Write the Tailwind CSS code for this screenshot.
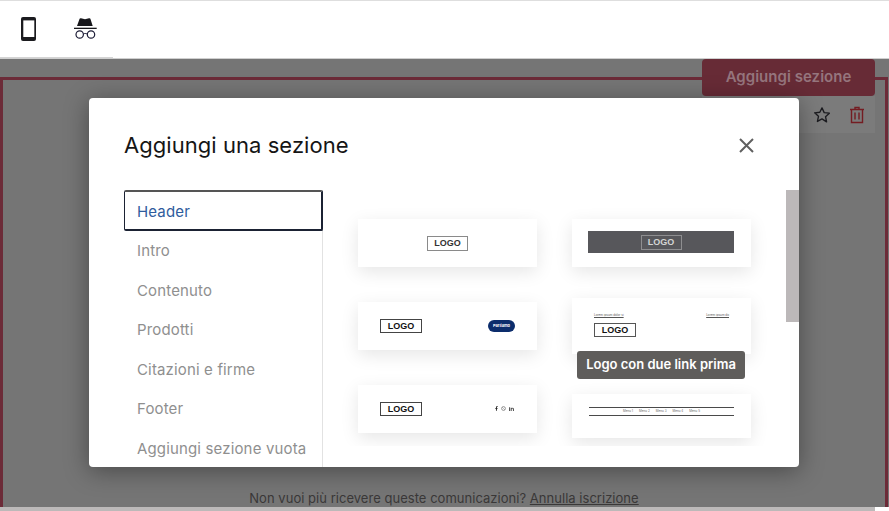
<!DOCTYPE html>
<html lang="it">
<head>
<meta charset="utf-8">
<script src="https://cdn.jsdelivr.net/npm/@tailwindcss/browser@4"></script>
<title>Aggiungi sezione</title>
</head>
<body class="bg-white font-['Inter',sans-serif]">
<div class="relative w-[889px] h-[511px] overflow-hidden flex flex-col bg-white">
  <!-- Toolbar -->
  <div class="h-[59px] shrink-0 border-t border-t-[#dedede] border-b border-b-[#cfcfcf] flex items-start">
    <div class="w-[113px] h-[57px] border-b border-b-[#d4d4d4] flex">
      <div class="w-[57px] h-full flex items-center justify-center">
        <svg width="15" height="24" viewBox="0 0 15 24" class="-mt-[1px]"><rect width="15" height="24" rx="2" fill="#1b1b1f"/><rect x="2.300" y="3.400" width="11" height="16.600" fill="#fff"/></svg>
      </div>
      <div class="w-[56px] h-full flex items-center justify-center">
        <svg width="24" height="24" viewBox="0 0 24 24" class="-mt-[1px] ml-[2px]"><path d="M3 9 5.600 1.800C5.800 1.200 6.400 1 7 1.200L11 2.200l4-1c.6-.2 1.200 0 1.400.6L18.700 9z" fill="#17171b"/><rect x="0" y="10.700" width="22.700" height="1.300" fill="#17171b"/><circle cx="5.700" cy="17.500" r="3.700" fill="none" stroke="#1b1b35" stroke-width="1.200"/><circle cx="17" cy="17.500" r="3.700" fill="none" stroke="#1b1b35" stroke-width="1.200"/><path d="M9.400 17c1.200-.7 2.400-.7 3.800 0" fill="none" stroke="#1b1b35" stroke-width="1"/></svg>
      </div>
    </div>
  </div>

  <!-- Dimmed canvas -->
  <div class="flex-1 bg-[#757575] pt-[18px] pr-[1px] min-h-0 relative">
    <div class="h-full border-t-[3px] border-l-[3px] border-r-[3px] border-[#6c2b38] flex flex-col justify-end items-center">
      <p class="text-[13px] leading-[18px] tracking-[0.03px] text-[#3a3838]">Non vuoi più ricevere queste comunicazioni? <a class="underline">Annulla iscrizione</a></p>
    </div>
    <div class="absolute top-0 right-[14px] w-[173px] flex flex-col items-stretch">
      <div class="h-[37px] bg-[#672b36] rounded-[4px] flex items-center justify-center text-[15px] tracking-[0.03px] font-semibold text-[#95757d]">Aggiungi sezione</div>
      <div class="h-[37px] bg-[#7b7b7b] flex items-center justify-end gap-[17px] pr-[9px]">
        <svg width="18" height="18" viewBox="0 0 24 24" fill="none" stroke="#1c1c20" stroke-width="1.800" stroke-linejoin="round"><path d="M12 2.500l2.900 6.300 6.900.8-5.100 4.700 1.400 6.800L12 17.100l-6.100 3.500 1.400-6.800-5.100-4.700 6.900-.8z"/></svg>
        <svg width="18" height="18" viewBox="0 0 18 18" fill="none" stroke="#741c22" stroke-width="1.400"><path d="M2 3.500h14M7 3.500V1.500h4v2M3.500 3.500v13h11v-13M7 6.500v7M11 6.500v7"/></svg>
      </div>
    </div>
  </div>

  <!-- Bottom scrollbar -->
  <div class="h-[4px] shrink-0 flex"><div class="w-[875px] bg-[#bcb9b9]"></div></div>

  <!-- Modal -->
  <div class="absolute left-[89px] top-[98px] w-[710px] h-[369px] bg-white rounded-[4px] shadow-[0_4px_24px_rgba(0,0,0,0.38)] overflow-hidden flex flex-col">
    <div class="h-[92px] shrink-0 flex items-start justify-between pl-[35px] pr-[45px] pt-[31px]">
      <h2 class="text-[22px] leading-[32px] tracking-[0.05px] font-normal text-[#151515]">Aggiungi una sezione</h2>
      <svg width="15" height="15" viewBox="0 0 15 15" class="mt-[9px]" fill="none" stroke="#606060" stroke-width="2"><path d="M1 1l13 13M14 1 1 14"/></svg>
    </div>
    <div class="flex-1 min-h-0 flex pl-[35px]">
      <!-- Categories -->
      <ul class="w-[199px] shrink-0 text-[15px] text-[#8f8f8f] tracking-[0.15px] border-r border-r-[#e2e2e2]">
        <li class="h-[41px] -mr-[1px] flex items-center pl-[12px] pt-[4px] text-[#2f5c9d] border-2 border-[#1b2233] border-t-[#555] border-l-[1.500px] rounded-[2px] bg-white">Header</li>
        <li class="h-[39.5px] flex items-center pl-[13px] pt-[1px]">Intro</li>
        <li class="h-[39.5px] flex items-center pl-[13px] pt-[1px]">Contenuto</li>
        <li class="h-[39.5px] flex items-center pl-[13px] pt-[1px]">Prodotti</li>
        <li class="h-[39.5px] flex items-center pl-[13px] pt-[1px]">Citazioni e firme</li>
        <li class="h-[39.5px] flex items-center pl-[13px] pt-[1px]">Footer</li>
        <li class="h-[39.5px] flex items-center pl-[13px] pt-[1px]">Aggiungi sezione vuota</li>
      </ul>
      <!-- Templates -->
      <div class="flex-1 flex items-start min-w-0">
        <div class="flex-1 h-[256px] overflow-hidden flex gap-[35px] pl-[35px] pt-[29px]">
          <div class="w-[179px] flex flex-col gap-[35px]">
            <div class="h-[48px] bg-white shadow-[0_5px_18px_rgba(0,0,0,0.10)] flex items-center justify-center">
              <span class="w-[41px] h-[15px] pt-[1px] border border-[#8a8a8a] flex items-center justify-center text-[9px] font-bold font-['Liberation_Sans',sans-serif] text-[#333]">LOGO</span>
            </div>
            <div class="h-[48px] bg-white shadow-[0_5px_18px_rgba(0,0,0,0.10)] flex items-center justify-between pl-[22px] pr-[22px]">
              <span class="w-[42px] h-[14px] pt-[1px] border border-[#444] flex items-center justify-center text-[9px] font-bold font-['Liberation_Sans',sans-serif] text-[#111]">LOGO</span>
              <span class="w-[27px] h-[12px] rounded-full bg-[#0c2d6c] flex items-center justify-center text-[4px] font-bold text-white">Parliamo</span>
            </div>
            <div class="h-[48px] bg-white shadow-[0_5px_18px_rgba(0,0,0,0.10)] flex items-center justify-between pl-[22px] pr-[23px]">
              <span class="w-[42px] h-[14px] pt-[1px] border border-[#444] flex items-center justify-center text-[9px] font-bold font-['Liberation_Sans',sans-serif] text-[#111]">LOGO</span>
              <span class="flex items-center gap-[3px] -mt-[1px]">
                <svg width="3" height="5" viewBox="0 0 4 6"><path d="M1.300 6V3.300H.3V2.200h1V1.400C1.300.5 1.900 0 2.700 0h1v1.100H3c-.4 0-.5.200-.5.500v.6h1.100L3.400 3.300h-.9V6z" fill="#222"/></svg>
                <svg width="5" height="5" viewBox="0 0 6 6"><circle cx="3" cy="3" r="2.300" fill="none" stroke="#666" stroke-width="0.800"/><path d="M1.500 1.500l3 3" stroke="#666" stroke-width="0.500"/></svg>
                <svg width="5" height="4" viewBox="0 0 6 5"><path d="M0 1h1.200v4H0zM2 1h1.200v.6C3.600 1 4.200.8 4.800 1 5.600 1.200 6 1.800 6 2.700V5H4.800V3c0-.6-.3-1-.8-1s-.8.400-.8 1v2H2z" fill="#444"/><rect width="1.200" height="0.800" fill="#444"/></svg>
              </span>
            </div>
          </div>
          <div class="w-[179px] flex flex-col">
            <div class="h-[48px] bg-white shadow-[0_5px_18px_rgba(0,0,0,0.10)] pl-[16px] pr-[17px] pt-[12px]">
              <div class="h-[22px] bg-[#57575b] flex items-center justify-center">
                <span class="w-[41px] h-[15px] pt-[1px] border border-[#8e8e90] flex items-center justify-center text-[9px] font-bold font-['Liberation_Sans',sans-serif] text-[#d4d4d4]">LOGO</span>
              </div>
            </div>
            <div class="mt-[31px] h-[56px] bg-white shadow-[0_5px_18px_rgba(0,0,0,0.10)] pl-[22px] pr-[22px] pt-[15px]">
              <div class="flex justify-between items-center h-[4px] text-[3px] leading-[4px] text-[#555] underline">
                <span>Lorem ipsum dolor si</span><span>Lorem ipsum do</span>
              </div>
              <span class="mt-[6px] w-[42px] h-[14px] pt-[1px] border border-[#555] flex items-center justify-center text-[9px] font-bold font-['Liberation_Sans',sans-serif] text-[#111]">LOGO</span>
            </div>
            <div class="mt-[40px] h-[44px] bg-white shadow-[0_5px_18px_rgba(0,0,0,0.10)] pl-[17px] pr-[17px] pt-[13px]">
              <div class="h-[9px] border-y border-[#4a4a4a] flex items-center justify-center gap-[6px] text-[3px] text-[#666]">
                <span>Menu 1</span><span>Menu 2</span><span>Menu 3</span><span>Menu 4</span><span>Menu 5</span>
              </div>
            </div>
          </div>
        </div>
        <div class="w-[13px] h-[132px] bg-[#bcb8b9] shrink-0"></div>
      </div>
    </div>
  </div>

  <!-- Tooltip -->
  <div class="absolute left-[577px] top-[351px] w-[168px] h-[28px] rounded-[3px] bg-[#5f5d5b] text-white text-[13px] font-semibold flex items-center justify-center">Logo con due link prima</div>
</div>
</body>
</html>
